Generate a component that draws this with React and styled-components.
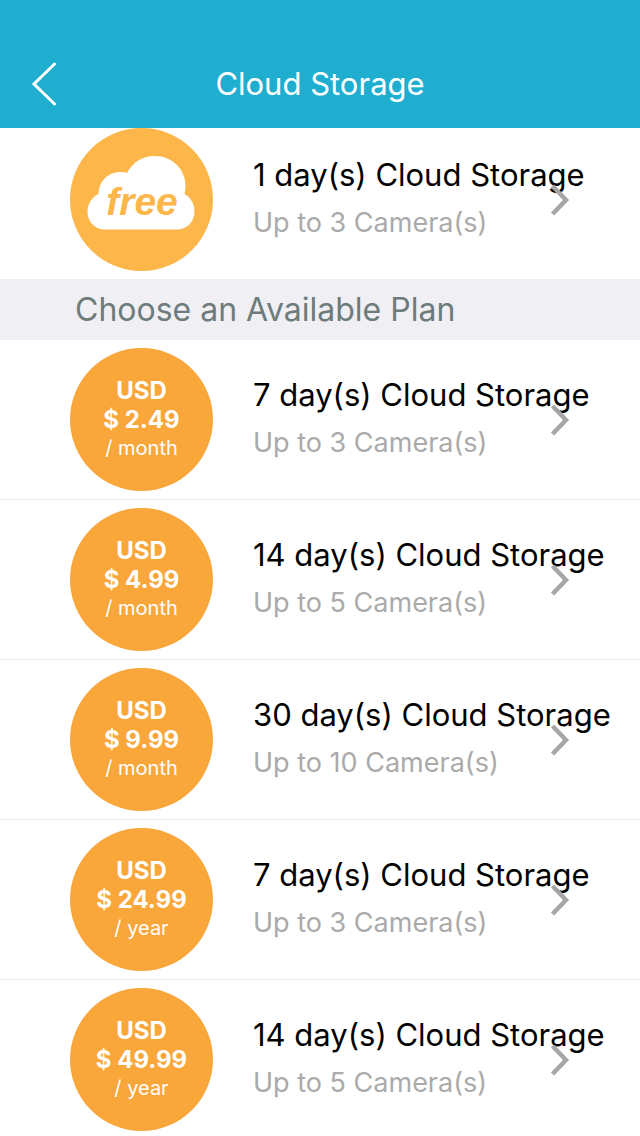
import React from 'react';
import styled, { createGlobalStyle } from 'styled-components';

const GlobalStyle = createGlobalStyle`
  * {
    box-sizing: border-box;
  }

  body {
    margin: 0;
    background-color: #fff;
    font-family: Inter, "Liberation Sans", sans-serif;
    color: #000;
  }
`;

const Screen = styled.div`
  display: flex;
  flex-direction: column;
  height: 100vh;
`;

const NavBar = styled.header`
  display: grid;
  grid-template-columns: 88px 1fr 88px;
  align-items: center;
  flex-shrink: 0;
  padding-top: 40px;
  background-color: #20aed0;
  color: #fff;
`;

const BackButton = styled.button`
  display: flex;
  align-items: center;
  justify-content: center;
  height: 88px;
  padding: 0;
  border: none;
  background: none;
  color: inherit;
  cursor: pointer;
`;

const NavTitle = styled.h1`
  margin: 0;
  padding-bottom: 2px;
  font-size: 31px;
  font-weight: 400;
  text-align: center;
`;

const Content = styled.main`
  flex: 1;
  overflow-y: auto;
  scrollbar-width: none;
`;

const PlanList = styled.ul`
  margin: 0;
  padding: 0;
  list-style: none;
`;

const PlanItem = styled.li`
  & + & {
    border-top: 1px solid #ebebeb;
  }
`;

const PlanButton = styled.button`
  position: relative;
  display: flex;
  align-items: center;
  gap: 40px;
  width: 100%;
  padding: ${props => (props.$flush ? '0 0 8px 70px' : '8px 0 8px 70px')};
  border: none;
  background: none;
  color: inherit;
  font-family: inherit;
  text-align: left;
  cursor: pointer;
`;

const Badge = styled.span`
  display: flex;
  flex-direction: column;
  align-items: center;
  justify-content: center;
  flex-shrink: 0;
  width: 143px;
  height: 143px;
  padding-bottom: ${props => (props.$free ? '0' : '2px')};
  border-radius: 50%;
  background-color: ${props => (props.$free ? '#fcb64a' : '#f9a73b')};
  color: #fff;
`;

const Price = styled.span`
  font-size: 24px;
  font-weight: 700;
  line-height: 29px;
`;

const Period = styled.span`
  font-size: 20px;
  line-height: 28px;
`;

const PlanText = styled.span`
  display: flex;
  flex-direction: column;
  padding-bottom: 2px;
  white-space: nowrap;
`;

const PlanName = styled.span`
  font-size: 31px;
  line-height: 48px;
`;

const PlanLimit = styled.span`
  font-size: 27px;
  line-height: 48px;
  color: #aaa;
`;

// Lies over the end of long plan names
const ChevronIcon = styled.svg`
  position: absolute;
  right: 70px;
  top: ${props => (props.$flush ? '56px' : '64px')};
`;

const SectionTitle = styled.h2`
  margin: 0;
  padding: 0 75px;
  background-color: #efeff4;
  color: #6d7b7b;
  font-size: 32px;
  font-weight: 400;
  line-height: 61px;
`;

const PLANS = [
  { days: 7, cameras: 3, price: '2.49', period: 'month' },
  { days: 14, cameras: 5, price: '4.99', period: 'month' },
  { days: 30, cameras: 10, price: '9.99', period: 'month' },
  { days: 7, cameras: 3, price: '24.99', period: 'year' },
  { days: 14, cameras: 5, price: '49.99', period: 'year' }
];

const FreeCloud = () => (
  <svg width="143" height="143" viewBox="0 0 143 143">
    <path
      d="M35 101.500C25 101.500 17.500 94 17.500 83.500C17.500 76 22 69 28.500 66C29 53 38 44 50.500 44C53 44 55 44.300 57 45C62 35 72 28 84.500 28C102 28 115.500 41 115.500 57.500C115.500 60.500 115.300 63 114.500 66C120.500 69.500 124.500 75.500 124.500 83C124.500 94 117 101.500 106.500 101.500Z"
      fill="#fff"
    />
    <text
      x="72"
      y="87"
      textAnchor="middle"
      fill="#fcb64a"
      fontFamily="Liberation Sans, sans-serif"
      fontSize="39"
      fontWeight="700"
      fontStyle="italic"
    >
      free
    </text>
  </svg>
);

const PlanRow = ({ days, cameras, price, period }) => {
  const isFree = !price;

  return (
    <PlanItem>
      <PlanButton type="button" $flush={isFree}>
        <Badge $free={isFree}>
          {isFree ? (
            <FreeCloud />
          ) : (
            <>
              <Price>USD</Price>
              <Price>$ {price}</Price>
              <Period>/ {period}</Period>
            </>
          )}
        </Badge>
        <PlanText>
          <PlanName>{days} day(s) Cloud Storage</PlanName>
          <PlanLimit>Up to {cameras} Camera(s)</PlanLimit>
        </PlanText>
        <ChevronIcon $flush={isFree} width="20" height="32" viewBox="0 0 20 32" aria-hidden="true">
          <path d="M2.500 2L16 16L2.500 30" fill="none" stroke="#a6a6a6" strokeWidth="4.500" />
        </ChevronIcon>
      </PlanButton>
    </PlanItem>
  );
};

const App = () => (
  <>
    <GlobalStyle />
    <Screen>
      <NavBar>
        <BackButton type="button" aria-label="Back">
          <svg width="26" height="44" viewBox="0 0 26 44">
            <path
              d="M23.500 2L3 22L23.500 42"
              fill="none"
              stroke="currentColor"
              strokeWidth="3"
              strokeLinecap="round"
            />
          </svg>
        </BackButton>
        <NavTitle>Cloud Storage</NavTitle>
      </NavBar>
      <Content>
        <PlanList>
          <PlanRow days={1} cameras={3} />
        </PlanList>
        <SectionTitle>Choose an Available Plan</SectionTitle>
        <PlanList>
          {PLANS.map(plan => (
            <PlanRow key={`${plan.days}-${plan.period}`} {...plan} />
          ))}
        </PlanList>
      </Content>
    </Screen>
  </>
);

export default App;
